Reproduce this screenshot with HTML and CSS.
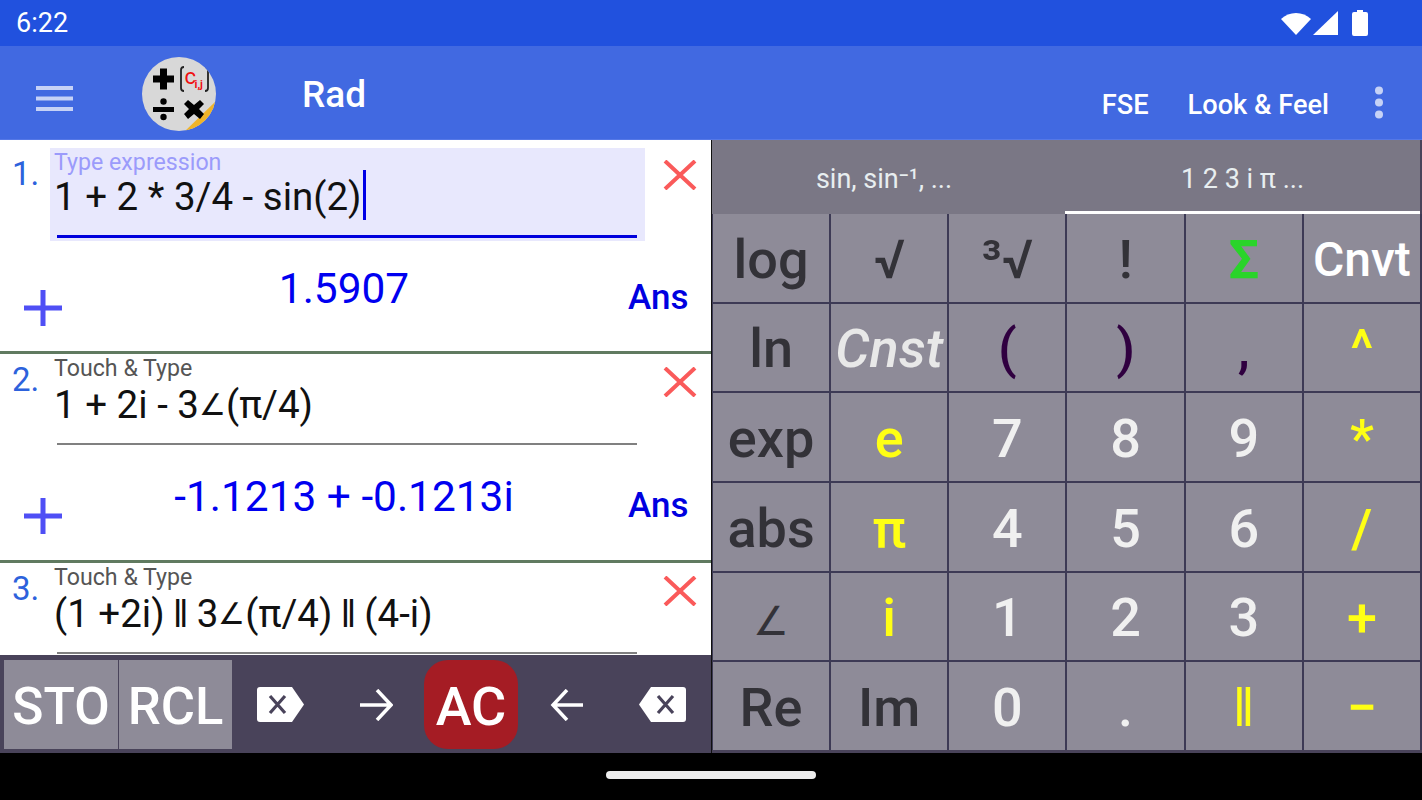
FILE: index.html
```html
<!DOCTYPE html>
<html lang="en">
<head>
<meta charset="utf-8">
<title>Calculator</title>
<link rel="stylesheet" href="styles.css">
</head>
<body>
<div class="app">
  <header class="status">
    <span class="time">6:22</span>
    <span class="status-icons">
      <svg class="ic-wifi" width="30" height="24" viewBox="0 0 30 24"><path d="M0 8 C8 0 22 0 30 8 L15 24 Z" fill="#fff"/></svg>
      <svg class="ic-signal" width="26" height="26" viewBox="0 0 26 26"><path d="M25 1 V25 H0 Z" fill="#fff"/></svg>
      <svg class="ic-batt" width="16" height="26" viewBox="0 0 16 26"><path d="M5 0 H11 V2 H14 Q16 2 16 4 V24 Q16 26 14 26 H2 Q0 26 0 24 V4 Q0 2 2 2 H5 Z" fill="#fff"/></svg>
    </span>
  </header>
  <nav class="toolbar">
    <svg class="burger" width="37" height="25" viewBox="0 0 37 25"><path d="M0 0h37v4H0zM0 10.500h37v4H0zM0 21h37v4H0z" fill="#c6d2f6"/></svg>
    <svg class="logo" width="74" height="74" viewBox="0 0 74 74">
      <defs><clipPath id="disc"><circle cx="37" cy="37" r="37"/></clipPath></defs>
      <g clip-path="url(#disc)">
        <rect width="74" height="74" fill="#d8d8d8"/>
        <path d="M73 45 L42 75 H75 Z" fill="#f0b429"/>
        <path d="M11 18.500h7v-7h7v7h7v7h-7v7h-7v-7h-7z" fill="#000"/>
        <path d="M11 50h21v5H11z" fill="#000"/>
        <circle cx="21.500" cy="44.500" r="3.200" fill="#000"/><circle cx="21.500" cy="60" r="3.200" fill="#000"/>
        <path d="M46 43l6 5 6-5 4 4-5 5 5 5-4 5-6-5-6 5-4-5 5-5-5-5z" fill="#000"/>
        <path d="M42 10 Q39 10 39 13 V31 Q39 34 42 34" fill="none" stroke="#222" stroke-width="1.800"/>
        <path d="M63 10 Q66 10 66 13 V31 Q66 34 63 34" fill="none" stroke="#222" stroke-width="1.800"/>
        <text x="42.500" y="27" class="logo-c">c</text>
        <text x="52.500" y="31" class="logo-ij">i,j</text>
      </g>
    </svg>
    <span class="title">Rad</span>
    <span class="spacer"></span>
    <span class="action act-fse">FSE</span>
    <span class="action act-look">Look &amp; Feel</span>
    <svg class="dots" width="10" height="33" viewBox="0 0 10 33"><g fill="#c6d2f6"><circle cx="5" cy="4.500" r="4"/><circle cx="5" cy="16.500" r="4"/><circle cx="5" cy="28.500" r="4"/></g></svg>
  </nav>

  <main class="content">
    <section class="left">
      <div class="list">
        <article class="row row-first">
          <div class="row-top">
            <span class="num">1.</span>
            <div class="field active">
              <div class="hint">Type expression</div>
              <div class="expr">1 + 2 * 3/4 - sin(2)<span class="caret"></span></div>
              <div class="line"></div>
            </div>
            <svg class="close" width="34" height="30" viewBox="0 0 34 30"><path d="M2 1 L32 29 M32 1 L2 29" stroke="#fa5a5a" stroke-width="4" fill="none"/></svg>
          </div>
          <div class="row-bottom">
            <svg class="plus" width="38" height="36" viewBox="0 0 38 36"><path d="M0 15.500h38v5H0zM16.500 0h5v36h-5z" fill="#4f4ff5"/></svg>
            <div class="result">1.5907</div>
            <div class="ans">Ans</div>
          </div>
        </article>
        <article class="row">
          <div class="row-top">
            <span class="num">2.</span>
            <div class="field">
              <div class="hint">Touch &amp; Type</div>
              <div class="expr">1 + 2i - 3<span class="ang">∠</span>(π/4)</div>
              <div class="line"></div>
            </div>
            <svg class="close" width="34" height="30" viewBox="0 0 34 30"><path d="M2 1 L32 29 M32 1 L2 29" stroke="#fa5a5a" stroke-width="4" fill="none"/></svg>
          </div>
          <div class="row-bottom">
            <svg class="plus" width="38" height="36" viewBox="0 0 38 36"><path d="M0 15.500h38v5H0zM16.500 0h5v36h-5z" fill="#4f4ff5"/></svg>
            <div class="result">-1.1213 + -0.1213i</div>
            <div class="ans">Ans</div>
          </div>
        </article>
        <article class="row">
          <div class="row-top">
            <span class="num">3.</span>
            <div class="field">
              <div class="hint">Touch &amp; Type</div>
              <div class="expr">(1 +2i) <span class="par">ǁ</span> 3<span class="ang">∠</span>(π/4) <span class="par">ǁ</span> (4-i)</div>
              <div class="line"></div>
            </div>
            <svg class="close" width="34" height="30" viewBox="0 0 34 30"><path d="M2 1 L32 29 M32 1 L2 29" stroke="#fa5a5a" stroke-width="4" fill="none"/></svg>
          </div>
        </article>
      </div>
      <div class="actions">
        <button class="mem mem-sto">STO</button>
        <button class="mem mem-rcl">RCL</button>
        <span class="tool">
          <svg width="47" height="35" viewBox="0 0 47 35"><path d="M3 0 H35 L47 17.500 L35 35 H3 Q0 35 0 32 V3 Q0 0 3 0 Z" fill="#fff"/><path d="M13 9 L28 26 M28 9 L13 26" stroke="#49435a" stroke-width="3.200" fill="none"/></svg>
        </span>
        <span class="tool">
          <svg width="33" height="32" viewBox="0 0 33 32"><path d="M0 16 H31 M17 1 L31 16 L17 31" stroke="#fff" stroke-width="3.500" fill="none"/></svg>
        </span>
        <button class="ac">AC</button>
        <span class="tool">
          <svg width="33" height="32" viewBox="0 0 33 32"><path d="M33 16 H3 M17 1 L3 16 L17 31" stroke="#fff" stroke-width="3.500" fill="none"/></svg>
        </span>
        <span class="tool">
          <svg width="47" height="35" viewBox="0 0 47 35"><path d="M44 0 H12 L0 17.500 L12 35 H44 Q47 35 47 32 V3 Q47 0 44 0 Z" fill="#fff"/><path d="M19 9 L34 26 M34 9 L19 26" stroke="#49435a" stroke-width="3.200" fill="none"/></svg>
        </span>
      </div>
    </section>

    <section class="right">
      <div class="tabs">
        <div class="tab tab-off">sin, sin⁻¹, ...</div>
        <div class="tab tab-on">1 2 3 i π ...</div>
      </div>
      <div class="keys">
        <div class="key dark">log</div><div class="key dark">√</div><div class="key dark">³√</div><div class="key dark">!</div><div class="key green">Σ</div><div class="key white cnvt">Cnvt</div>
        <div class="key dark">ln</div><div class="key light cnst">Cnst</div><div class="key plum">(</div><div class="key plum">)</div><div class="key plum">,</div><div class="key yellow">^</div>
        <div class="key dark">exp</div><div class="key yellow">e</div><div class="key light">7</div><div class="key light">8</div><div class="key light">9</div><div class="key yellow">*</div>
        <div class="key dark">abs</div><div class="key yellow">π</div><div class="key light">4</div><div class="key light">5</div><div class="key light">6</div><div class="key yellow">/</div>
        <div class="key dark key-ang">∠</div><div class="key yellow">i</div><div class="key light">1</div><div class="key light">2</div><div class="key light">3</div><div class="key yellow">+</div>
        <div class="key dark">Re</div><div class="key dark">Im</div><div class="key light">0</div><div class="key light">.</div><div class="key yellow">ǁ</div><div class="key yellow">−</div>
      </div>
    </section>
  </main>

  <footer class="navbar"><span class="pill"></span></footer>
</div>
</body>
</html>
```
FILE: styles.css
```css
* { box-sizing: border-box; }
html, body { margin: 0; padding: 0; }
body { background: #000; font-family: Roboto, "Liberation Sans", sans-serif; }
.app { width: 1422px; height: 800px; display: flex; flex-direction: column; overflow: hidden; }

.status { height: 46px; flex: none; background: #2151de; color: #fff; display: flex; align-items: center; justify-content: space-between; padding: 0 54px 0 16px; }
.time { font-size: 27px; line-height: 48px; }
.status-icons { display: flex; align-items: center; gap: 0; }
.ic-wifi { margin-right: 2px; margin-left: 1px; }
.ic-signal { margin-right: 13px; }

.toolbar { height: 94px; flex: none; background: #4169e1; color: #fff; display: flex; align-items: center; padding-left: 36px; border-bottom: 1px solid #5578e6; }
.burger { margin-top: 12px; margin-right: 69px; flex: none; }
.logo { margin-top: 2px; margin-right: 87px; flex: none; }
.title { font-size: 37px; font-weight: 500; line-height: 42px; margin-top: 4px; margin-left: -1px; }
.spacer { flex: 1; }
.action { font-size: 27.200px; font-weight: 500; line-height: 32px; margin-top: 24px; }
.act-fse { margin-right: 39px; }
.act-look { margin-right: 45px; }
.dots { margin-top: 20px; margin-right: 38px; flex: none; }

.content { flex: 1; display: flex; min-height: 0; }
.left { width: 712px; flex: none; display: flex; flex-direction: column; border-right: 1px solid #111; }
.list { height: 515px; flex: none; background: #fff; overflow: hidden; }
.row { height: 209px; border-bottom: 3px solid #607a60; overflow: hidden; }
.row-first { height: 214px; padding-top: 8px; }
.row-top { display: flex; align-items: flex-start; }
.num { width: 50px; flex: none; padding-left: 12px; font-size: 33px; line-height: 40px; color: #2d62dc; margin-top: 6px; }
.field { width: 595px; flex: none; height: 93px; padding: 1px 8px 0 4px; }
.field.active { background: #e8e8fd; }
.hint { font-size: 23.200px; line-height: 27px; color: #555; }
.active .hint { color: #9b9bfb; }
.expr { height: 42px; margin-top: 2px; font-size: 38.500px; line-height: 42px; color: #111; display: flex; align-items: center; white-space: pre; }
.active .expr { margin-top: 0; }
.ang { font-size: 30px; }
.par { margin: 0 -1.500px; }
.caret { flex: none; width: 3px; height: 50px; background: #0000e6; margin: 0 0 5px 1px; }
.line { height: 2px; background: #808080; margin: 17px 0 0 3px; }
.active .line { height: 3px; background: #0000dc; margin-top: 17px; }
.close { margin: 13px 0 0 18px; flex: none; }
.active + .close { margin-top: 12px; }
.row-bottom { height: 106px; display: flex; }
.row-first .row-bottom { margin-top: -2px; }
.plus { margin: 51px 0 0 24px; flex: none; }
.result { width: 606px; flex: none; text-align: center; font-size: 42.400px; line-height: 50px; color: #0000f0; margin: 25px 0 0 -21px; white-space: nowrap; }
.ans { font-size: 35px; font-weight: 500; line-height: 40px; color: #0000e0; margin: 39px 0 0 -19px; }

.actions { flex: 1; background: #49435a; display: flex; align-items: flex-start; padding: 5px 0 0 4px; }
.mem { height: 89px; border: 0; padding: 4px 0 0; background: #8e8b98; color: #fff; font-family: Roboto, sans-serif; font-weight: 500; line-height: 85px; margin-right: 1px; }
.mem-sto { width: 114px; font-size: 51.500px; }
.mem-rcl { width: 113px; font-size: 52.500px; margin-right: 0; }
.tool { flex: none; width: 96px; height: 89px; display: flex; align-items: center; justify-content: center; }
.ac { width: 94px; height: 89px; border: 0; border-radius: 24px; background: #a51c24; color: #fff; font: 500 54px/85px Roboto, sans-serif; padding: 4px 0 0; }

.right { flex: 1; display: flex; flex-direction: column; background: #49435a; min-width: 0; }
.tabs { height: 74px; flex: none; display: flex; background: #7a7785; margin-right: 2px; }
.tab { display: flex; align-items: center; justify-content: center; font-size: 27px; color: #e8eef0; padding-top: 3px; }
.tab-off { width: 353px; flex: none; padding-right: 9px; }
.tab-on { flex: 1; box-shadow: inset 0 -3px 0 #fff; }
.keys { height: 536px; flex: none; display: grid; grid-template-columns: repeat(6, 1fr); grid-template-rows: repeat(6, 1fr); gap: 2px; background: #3d3a55; padding: 0 2px 0 1px; }
.key { background: #8e8b98; display: flex; align-items: center; justify-content: center; font-size: 54px; font-weight: 500; line-height: 1; padding-top: 4px; }
.dark { color: #333238; }
.light { color: #f0f0f0; }
.white { color: #fff; }
.yellow { color: #ffff14; }
.green { color: #2ad42a; font-weight: 700; }
.plum { color: #300040; }
.cnvt { font-size: 48px; }
.cnst { font-style: italic; color: #e8e8e8; }
.key-ang { font-size: 40px; font-weight: 400; padding-top: 12px; }
.logo-c { font: 400 22px Roboto, sans-serif; fill: #f01010; }
.logo-ij { font: 700 11px Roboto, sans-serif; fill: #f01010; }

.navbar { height: 47px; flex: none; background: #000; display: flex; justify-content: center; padding-top: 18px; }
.pill { width: 210px; height: 8px; border-radius: 4px; background: #eee; }
```
